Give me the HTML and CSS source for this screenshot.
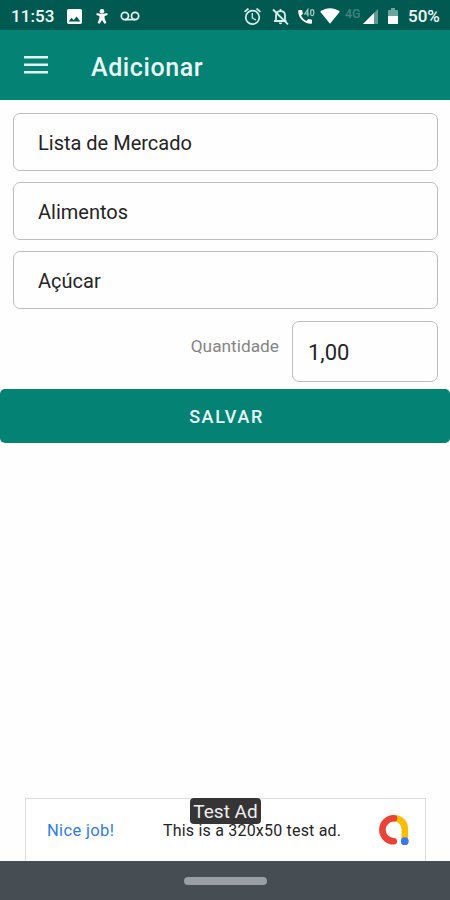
FILE: index.html
```html
<!DOCTYPE html>
<html lang="pt-BR">
<head>
    <meta charset="UTF-8">
    <meta name="viewport" content="width=device-width, initial-scale=1.0">
    <title>Adicionar - Lista de Mercado</title>
    <link rel="stylesheet" href="styles.css">
</head>
<body>
    <div class="status-bar">
        <div class="status-left">
            <span class="clock">11:53</span>
            <svg class="icon-image" width="15" height="15" viewBox="3 3 18 18"><path fill="#fff" d="M21 19V5c0-1.1-.9-2-2-2H5c-1.100 0-2 .9-2 2v14c0 1.100.9 2 2 2h14c1.100 0 2-.9 2-2zM8.500 13.500l2.500 3 3.500-4.500 4.500 6H5l3.500-4.500z"/></svg>
            <svg class="icon-person" width="12" height="15" viewBox="0 0 12 15"><circle cx="6" cy="2.300" r="2.300" fill="#fff"/><path fill="#fff" d="M.8 4L4.300 4.800h3.400l3.500-.8.500 2-3.100 1v2.200l1.800 4.800-2 .8L6 11l-2.400 3.800-2-.8 1.800-4.800V7L.3 6z"/></svg>
            <svg class="icon-voicemail" width="20" height="10" viewBox="0 0 20 10"><g fill="none" stroke="#e6f5f2" stroke-width="1.700"><circle cx="4.900" cy="5" r="3.600"/><circle cx="15.100" cy="5" r="3.600"/><path d="M4.900 8.600h10.200"/></g></svg>
        </div>
        <div class="status-right">
            <svg class="icon-alarm" width="17" height="17" viewBox="2 2 20 20"><path fill="#d9eeea" d="M22 5.720l-4.600-3.860-1.290 1.530 4.600 3.860L22 5.720zM7.880 3.390L6.600 1.860 2 5.710l1.290 1.530 4.590-3.850zM12.500 8H11v6l4.750 2.850.75-1.230-4-2.370V8zM12 4a9 9 0 1 0 0 18 9 9 0 0 0 0-18zm0 16a7 7 0 1 1 0-14 7 7 0 0 1 0 14z"/></svg>
            <svg class="icon-bell" width="17" height="17" viewBox="0 0 17 17"><g fill="none" stroke="#d9eeea" stroke-width="1.800"><path d="M2 13h12.500M4 13V7.500C4 5 5.800 3.200 8.500 3.200S13 5 13 7.500V13M8.500 3.200V1"/><path d="M1 1.500L16 16.300"/></g><path fill="#d9eeea" d="M6.800 14.500h3.400a1.700 1.700 0 0 1-3.400 0z"/></svg>
            <svg class="icon-call" width="17" height="17" viewBox="0 0 17 17"><path fill="#fff" d="M1.100 2h3l.8 3.700-1.800 1.800c1.200 2.400 3 4.200 5.400 5.400l1.800-1.900 3.700.8v3c0 .6-.4 1-1 1C6 15.800.2 10 .2 3c0-.6.400-1 .9-1z"/><g fill="none" stroke="#a9d0ca" stroke-width="1.200"><path d="M9.800 8.500V1.500L6.800 6h4.300"/><rect x="12.700" y="1.600" width="3" height="6" rx="1.500"/></g></svg>
            <svg class="icon-wifi" width="20" height="16" viewBox="0 0 20 16"><path fill="#fff" d="M10 15.800L.2 3.700C2.700 1.500 6 .2 10 .2s7.300 1.300 9.800 3.500z"/></svg>
            <span class="network">4G</span>
            <svg class="icon-signal" width="15" height="15" viewBox="0 0 15 15"><path fill="#5d9b93" d="M0 15L15 0v15z"/><path fill="#fff" d="M0 15L11 4v11z"/></svg>
            <svg class="icon-battery" width="10" height="16" viewBox="0 0 10 16"><path fill="#6ba59e" d="M3 0h4v2h2c.6 0 1 .4 1 1v5H0V3c0-.6.400-1 1-1h2z"/><path fill="#fff" d="M0 8h10v7c0 .6-.4 1-1 1H1c-.6 0-1-.4-1-1z"/></svg>
            <span class="battery-level">50%</span>
        </div>
    </div>

    <header class="toolbar">
        <svg class="menu-icon" width="24" height="18" viewBox="0 0 24 18"><path fill="#e4f3f0" d="M0 0h24v2.500H0zM0 7.500h24V10H0zM0 15h24v2.500H0z"/></svg>
        <h1>Adicionar</h1>
    </header>

    <main class="content">
        <div class="fields">
            <div class="field">Lista de Mercado</div>
            <div class="field">Alimentos</div>
            <div class="field">Açúcar</div>
            <div class="quantity-row">
                <span class="quantity-label">Quantidade</span>
                <div class="quantity-field">1,00</div>
            </div>
        </div>
        <button class="save-button">SALVAR</button>
    </main>

    <div class="ad-banner">
        <span class="ad-badge">Test Ad</span>
        <span class="ad-title">Nice job!</span>
        <span class="ad-text">This is a 320x50 test ad.</span>
        <svg class="ad-logo" width="32" height="32" viewBox="0 0 32 32">
            <g fill="none" stroke-width="6.600" stroke-linecap="round">
                <path stroke="#fbbc04" d="M16 4.300c6.300 0 10.800 4.600 10.800 10.900V27"/>
                <path stroke="#ea4335" d="M16 4.300A11.500 11.500 0 0 0 15.800 27.300"/>
            </g>
            <circle cx="26.800" cy="27.200" r="3.900" fill="#3b78e7"/>
        </svg>
    </div>

    <nav class="nav-bar">
        <span class="nav-handle"></span>
    </nav>
</body>
</html>
```

FILE: styles.css
```css
:root {
    --primary-color: #048375;
    --primary-dark: #005a51;
    --border-color: #bdbdbd;
    --text-color: #242424;
}

* {
    box-sizing: border-box;
    margin: 0;
    padding: 0;
    font-family: Roboto, sans-serif;
}

body {
    height: 900px;
    display: flex;
    flex-direction: column;
    background: #fefefe;
    color: var(--text-color);
    overflow: hidden;
}

svg {
    display: block;
    flex-shrink: 0;
}

.status-bar {
    height: 30px;
    padding: 2px 9px 0 11px;
    display: flex;
    justify-content: space-between;
    background: var(--primary-dark);
    color: #f2faf8;
}

.status-left,
.status-right {
    display: flex;
    align-items: center;
}

.clock {
    width: 56px;
    font-size: 17px;
    font-weight: 500;
    letter-spacing: 0.1px;
}

.icon-person {
    margin-left: 14px;
}

.icon-voicemail {
    margin-left: 12px;
}

.icon-bell {
    margin-left: 11px;
}

.icon-call {
    margin-left: 9px;
}

.icon-wifi {
    margin-left: 5px;
}

.network {
    width: 18px;
    margin: -6px 0 0 5px;
    font-size: 12.5px;
    font-weight: 500;
    color: #3f867e;
}

.icon-battery {
    margin-left: 10px;
}

.battery-level {
    width: 33px;
    margin-left: 10px;
    font-size: 17px;
    font-weight: 500;
}

.toolbar {
    height: 70px;
    padding: 4px 24px 0;
    display: flex;
    align-items: center;
    gap: 43px;
    background: var(--primary-color);
    color: #e9f7f4;
}

.menu-icon {
    margin-top: -4px;
}

.toolbar h1 {
    font-size: 25px;
    font-weight: 500;
    letter-spacing: 0.6px;
}

.content {
    flex: 1;
}

.fields {
    padding: 13px 12px 7px 13px;
    display: flex;
    flex-direction: column;
    gap: 11px;
}

.field {
    height: 58px;
    padding: 1px 0 0 24px;
    display: flex;
    align-items: center;
    border: 1px solid var(--border-color);
    border-radius: 7px;
    font-size: 20px;
}

.quantity-row {
    display: flex;
    justify-content: flex-end;
    gap: 13px;
    padding-top: 1px;
}

.quantity-label {
    padding-top: 15px;
    font-size: 17.3px;
    line-height: 21px;
    color: #858585;
}

.quantity-field {
    width: 146px;
    height: 61px;
    padding: 2px 0 0 15px;
    display: flex;
    align-items: center;
    border: 1px solid var(--border-color);
    border-radius: 7px;
    font-size: 22px;
}

.save-button {
    display: block;
    width: 100%;
    height: 54px;
    padding-left: 3px;
    border: none;
    border-radius: 5px;
    background: var(--primary-color);
    color: #e9f7f4;
    font-size: 18px;
    font-weight: 500;
    letter-spacing: 1.6px;
}

.ad-banner {
    position: relative;
    width: 401px;
    height: 63px;
    margin-left: 25px;
    padding: 0 15px 0 21px;
    display: flex;
    align-items: center;
    border: 1px solid #dcdcdc;
    border-bottom: none;
    background: #fff;
}

.ad-badge {
    position: absolute;
    top: -1px;
    left: 164px;
    width: 71px;
    height: 26px;
    border-radius: 4px;
    background: #353535;
    color: #f0f0f0;
    font-size: 19px;
    line-height: 27px;
    text-align: center;
}

.ad-title {
    width: 116px;
    font-size: 16.5px;
    letter-spacing: 0.35px;
    color: #2f7de9;
}

.ad-text {
    flex: 1;
    font-size: 16px;
    letter-spacing: 0.2px;
    white-space: nowrap;
}

.nav-bar {
    height: 39px;
    display: flex;
    justify-content: center;
    align-items: center;
    background: #464e54;
}

.nav-handle {
    width: 83px;
    height: 8px;
    border-radius: 4px;
    background: #9a9fa3;
}
```
